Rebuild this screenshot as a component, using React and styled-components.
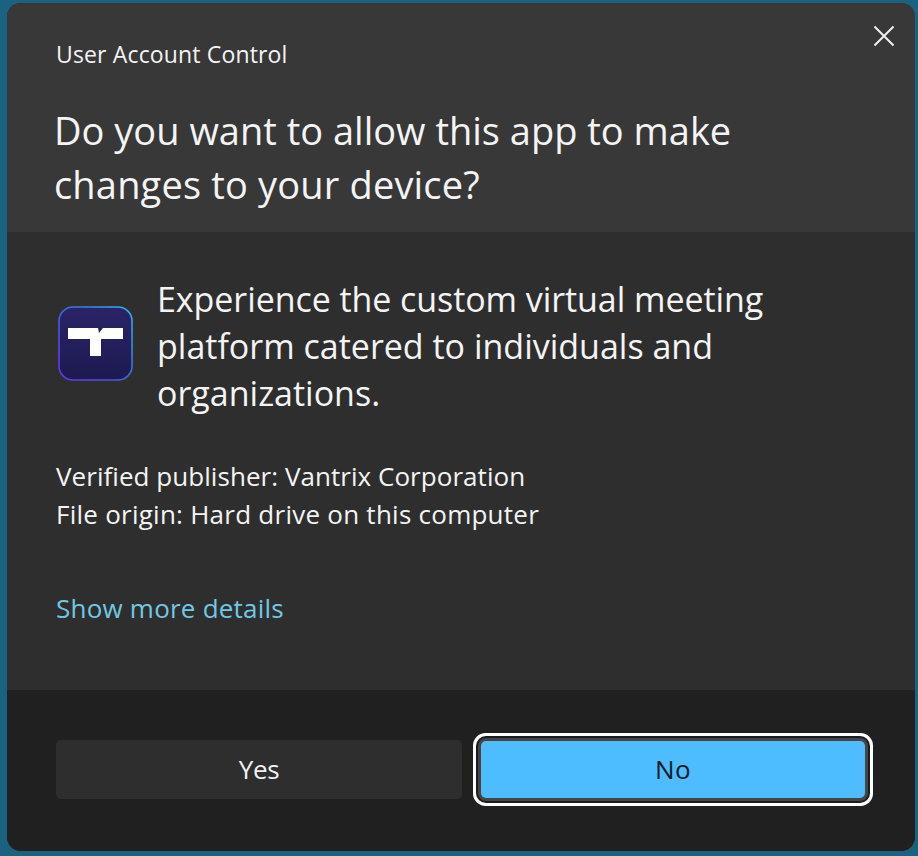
import React from 'react';
import styled, { createGlobalStyle } from 'styled-components';

const GlobalStyle = createGlobalStyle`
    html, body {
        margin: 0;
        padding: 0;
        background: #1b6280;
    }
`;

const Page = styled.div`
    box-sizing: border-box;
    width: 918px;
    height: 856px;
    padding: 3px 3px 5px 7px;
    overflow: hidden;
    font-family: "Open Sans", "Noto Sans", sans-serif;
`;

const Dialog = styled.div`
    position: relative;
    display: flex;
    flex-direction: column;
    height: 100%;
    border-radius: 14px;
    overflow: hidden;
    background: #2e2e2e;
    color: #f4f4f4;
`;

const Header = styled.header`
    box-sizing: border-box;
    height: 229px;
    padding: 37px 40px 0 47px;
    background: #383838;
`;

const Caption = styled.div`
    padding-left: 2px;
    font-size: 23px;
    line-height: 28px;
    letter-spacing: 0.15px;
`;

const Title = styled.h1`
    margin: 35px 0 0;
    font-size: 38px;
    font-weight: 400;
    line-height: 54px;
    white-space: nowrap;
`;

/* one line of text, tracked on its own so that it ends where the reference does */
const Line = styled.span`
    display: block;
    letter-spacing: ${({ $tracking }) => $tracking || 0}px;
`;

const CloseButton = styled.button`
    position: absolute;
    top: 22px;
    right: 20px;
    display: flex;
    width: 22px;
    height: 22px;
    padding: 0;
    border: 0;
    background: none;
    color: #f0f0f0;
`;

const Body = styled.main`
    flex: 1;
    box-sizing: border-box;
    padding: 44px 40px 0 49px;
`;

const AppRow = styled.div`
    display: flex;
    align-items: flex-start;
    gap: 24px;
    margin-left: 2px;
`;

const IconSlot = styled.div`
    flex-shrink: 0;
    height: 75px;
    margin-top: 30px;
`;

const AppName = styled.div`
    width: 680px;
    font-size: 34px;
    line-height: 47px;
`;

const Details = styled.div`
    margin-top: 40px;
    font-size: 26px;
    line-height: 38px;
`;

const MoreLink = styled.a`
    display: block;
    margin-top: 56px;
    color: #72c8e4;
    font-size: 26px;
    line-height: 38px;
    letter-spacing: 0.22px;
`;

const Footer = styled.footer`
    display: flex;
    align-items: center;
    box-sizing: border-box;
    height: 161px;
    padding: 0 49px 2px;
    gap: 19px;
    background: #202020;
`;

const Button = styled.button`
    box-sizing: border-box;
    width: ${({ $width }) => $width}px;
    height: ${({ $primary }) => ($primary ? 57 : 59)}px;
    padding: 0 0 2px;
    border: 0;
    border-radius: 5px;
    font-family: inherit;
    font-size: 26px;
    letter-spacing: ${({ $primary }) => ($primary ? 0.5 : -0.3)}px;
    color: ${({ $primary }) => ($primary ? '#0b1a24' : '#f2f2f2')};
    background: ${({ $primary }) => ($primary ? '#4dbdff' : '#2e2e2e')};
    box-shadow: ${({ $primary }) => ($primary ? '0 0 0 3px #454545, 0 0 0 5px #1c1c1c, 0 0 0 8px #fff' : 'none')};
`;

const AppIcon = () => (
    <svg width="75" height="75" viewBox="0 0 75 75" display="block">
        <defs>
            <linearGradient id="iconFill" x1="0" y1="0" x2="0" y2="1">
                <stop offset="0" stopColor="#2a2468" />
                <stop offset="1" stopColor="#1c1a50" />
            </linearGradient>
            <linearGradient id="iconEdge" x1="0" y1="1" x2="1" y2="0">
                <stop offset="0" stopColor="#6a32e8" />
                <stop offset="0.5" stopColor="#3f64d8" />
                <stop offset="1" stopColor="#38b4e8" />
            </linearGradient>
        </defs>
        <rect x="1" y="1" width="73" height="73" rx="14" fill="url(#iconFill)" stroke="url(#iconEdge)" strokeWidth="1.6" />
        <path d="M10 22H40L41 27L45 22H65V33H43V50H32V33H10Z" fill="#fff" />
    </svg>
);

const CloseIcon = () => (
    <svg width="22" height="22" viewBox="0 0 22 22" fill="none" stroke="currentColor" strokeWidth="2">
        <path d="M1.5 1.5L20.5 20.5M20.5 1.5L1.5 20.5" />
    </svg>
);

export default function App() {
    return (
        <Page>
            <GlobalStyle />
            <Dialog>
                <Header>
                    <Caption>User Account Control</Caption>
                    <Title>
                        <Line>Do you want to allow this app to make</Line>
                        <Line $tracking={0.17}>changes to your device?</Line>
                    </Title>
                </Header>
                <CloseButton aria-label="Close">
                    <CloseIcon />
                </CloseButton>
                <Body>
                    <AppRow>
                        <IconSlot>
                            <AppIcon />
                        </IconSlot>
                        <AppName>
                            <Line $tracking={-0.07}>Experience the custom virtual meeting</Line>
                            <Line>platform catered to individuals and</Line>
                            <Line>organizations.</Line>
                        </AppName>
                    </AppRow>
                    <Details>
                        <Line $tracking={0.05}>Verified publisher: Vantrix Corporation</Line>
                        <Line $tracking={0.25}>File origin: Hard drive on this computer</Line>
                    </Details>
                    <MoreLink>Show more details</MoreLink>
                </Body>
                <Footer>
                    <Button $width={406}>Yes</Button>
                    <Button $primary $width={384}>No</Button>
                </Footer>
            </Dialog>
        </Page>
    );
}
